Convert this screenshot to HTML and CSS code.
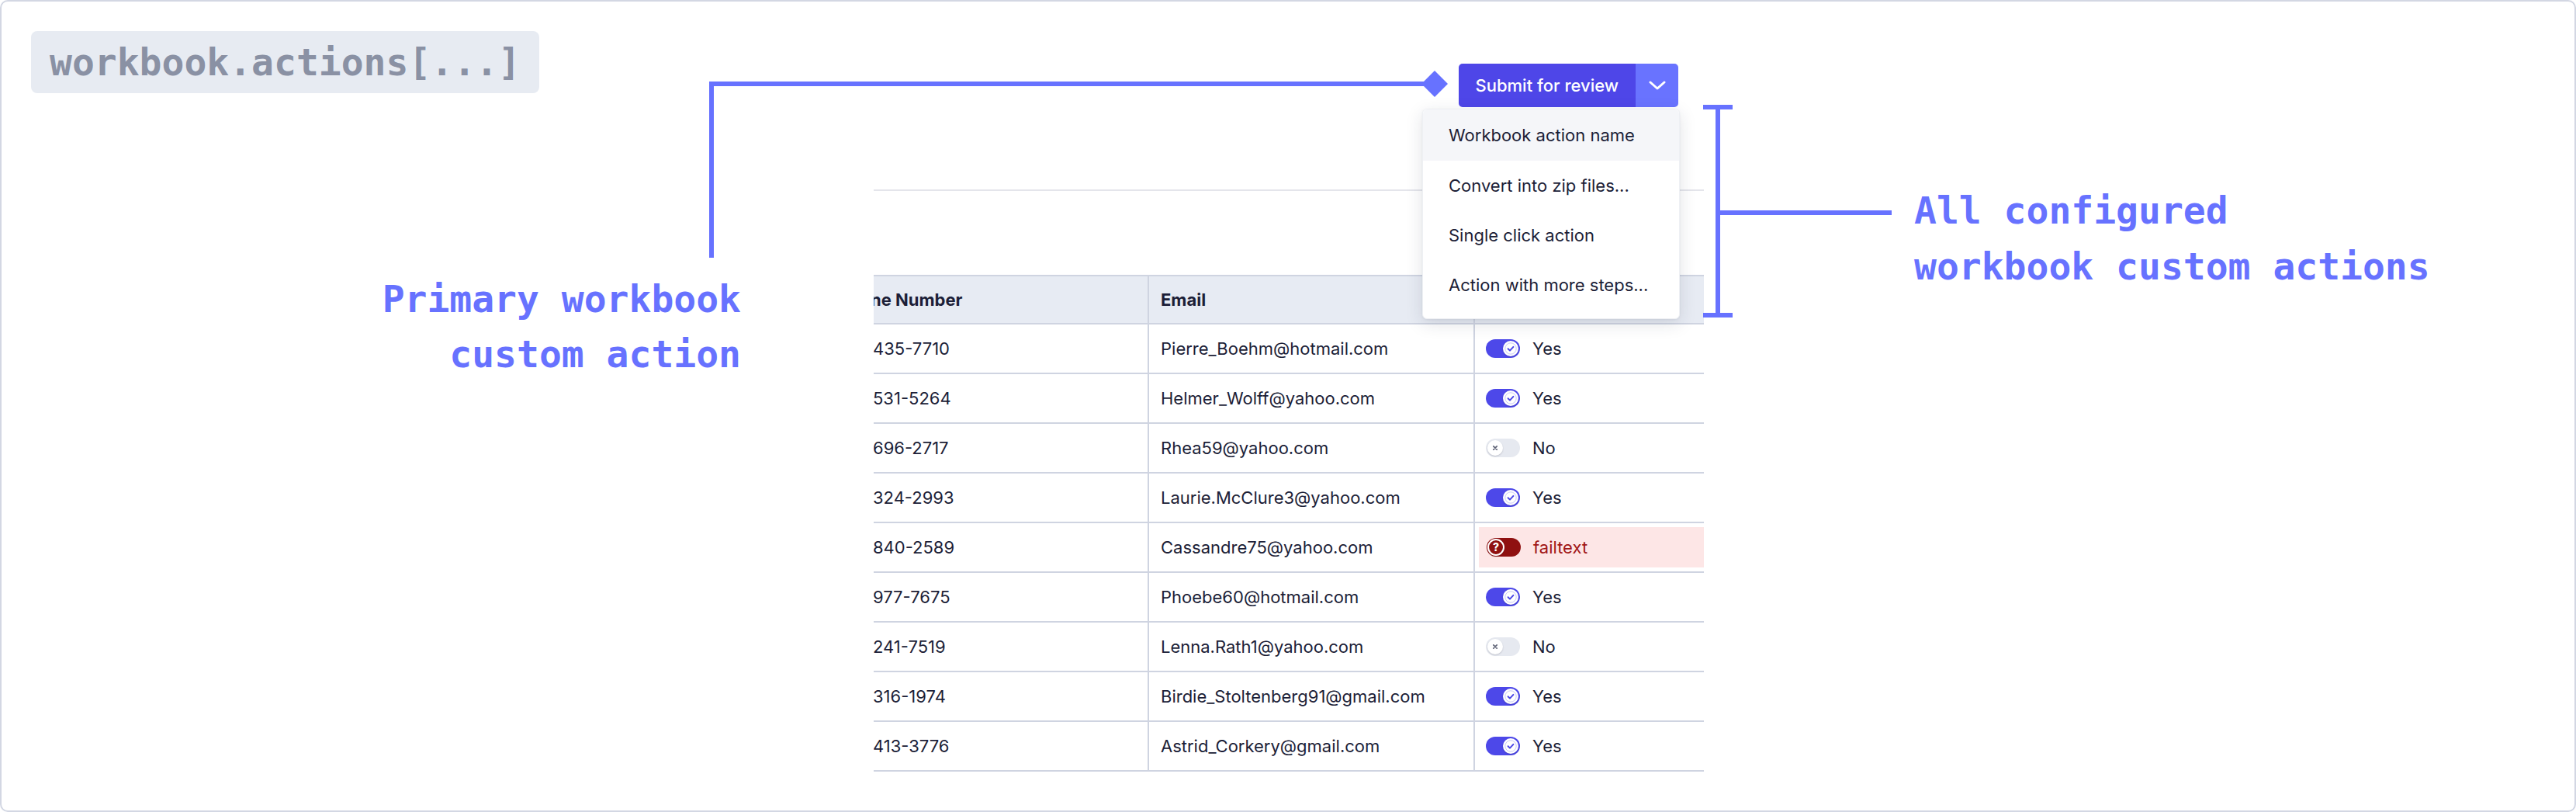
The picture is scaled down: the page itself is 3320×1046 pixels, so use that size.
FILE: index.html
```html
<!DOCTYPE html>
<html lang="en">
<head>
<meta charset="utf-8">
<title>workbook.actions</title>
<link rel="stylesheet" href="styles.css">
</head>
<body>
<div class="frame">
  <div class="code-badge">workbook.actions[...]</div>

  <div class="app">
    <div class="toolbar">
      <div class="split-btn">
        <span class="btn-main">Submit for review</span>
        <span class="btn-more">
          <svg width="22" height="12" viewBox="0 0 22 12"><path d="M2 2 L11 10 L20 2" fill="none" stroke="#fff" stroke-width="3" stroke-linecap="round" stroke-linejoin="round"/></svg>
        </span>
      </div>
      <div class="menu">
        <div class="menu-item is-active">Workbook action name</div>
        <div class="menu-item">Convert into zip files...</div>
        <div class="menu-item">Single click action</div>
        <div class="menu-item">Action with more steps...</div>
      </div>
    </div>

    <div class="table-wrap">
      <div class="row head">
        <div class="cell c1"><span class="cut-head">ne Number</span></div>
        <div class="cell c2">Email</div>
        <div class="cell c3"></div>
      </div>
      <div class="row">
        <div class="cell c1"><span class="cut">435-7710</span></div>
        <div class="cell c2">Pierre_Boehm@hotmail.com</div>
        <div class="cell c3"><span class="toggle on"><span class="knob"><svg width="20" height="20" viewBox="0 0 20 20"><circle cx="10" cy="10" r="7.2" fill="none" stroke="#c9c8f7" stroke-width="1"/><path d="M6.6 10.3 L9 12.6 L13.4 7.9" fill="none" stroke="#4b47e6" stroke-width="2" stroke-linecap="round" stroke-linejoin="round"/></svg></span></span><span class="val">Yes</span></div>
      </div>
      <div class="row">
        <div class="cell c1"><span class="cut">531-5264</span></div>
        <div class="cell c2">Helmer_Wolff@yahoo.com</div>
        <div class="cell c3"><span class="toggle on"><span class="knob"><svg width="20" height="20" viewBox="0 0 20 20"><circle cx="10" cy="10" r="7.2" fill="none" stroke="#c9c8f7" stroke-width="1"/><path d="M6.6 10.3 L9 12.6 L13.4 7.9" fill="none" stroke="#4b47e6" stroke-width="2" stroke-linecap="round" stroke-linejoin="round"/></svg></span></span><span class="val">Yes</span></div>
      </div>
      <div class="row">
        <div class="cell c1"><span class="cut">696-2717</span></div>
        <div class="cell c2">Rhea59@yahoo.com</div>
        <div class="cell c3"><span class="toggle off"><span class="knob"><svg width="20" height="20" viewBox="0 0 20 20"><path d="M7.8 7.8 L12.2 12.2 M12.2 7.8 L7.8 12.2" fill="none" stroke="#5f6376" stroke-width="1.7" stroke-linecap="round"/></svg></span></span><span class="val">No</span></div>
      </div>
      <div class="row">
        <div class="cell c1"><span class="cut">324-2993</span></div>
        <div class="cell c2">Laurie.McClure3@yahoo.com</div>
        <div class="cell c3"><span class="toggle on"><span class="knob"><svg width="20" height="20" viewBox="0 0 20 20"><circle cx="10" cy="10" r="7.2" fill="none" stroke="#c9c8f7" stroke-width="1"/><path d="M6.6 10.3 L9 12.6 L13.4 7.9" fill="none" stroke="#4b47e6" stroke-width="2" stroke-linecap="round" stroke-linejoin="round"/></svg></span></span><span class="val">Yes</span></div>
      </div>
      <div class="row">
        <div class="cell c1"><span class="cut">840-2589</span></div>
        <div class="cell c2">Cassandre75@yahoo.com</div>
        <div class="cell c3 fail-cell"><div class="fail-box"><span class="toggle fail"><span class="knob"><span class="q">?</span></span></span><span class="val fail-text">failtext</span></div></div>
      </div>
      <div class="row">
        <div class="cell c1"><span class="cut">977-7675</span></div>
        <div class="cell c2">Phoebe60@hotmail.com</div>
        <div class="cell c3"><span class="toggle on"><span class="knob"><svg width="20" height="20" viewBox="0 0 20 20"><circle cx="10" cy="10" r="7.2" fill="none" stroke="#c9c8f7" stroke-width="1"/><path d="M6.6 10.3 L9 12.6 L13.4 7.9" fill="none" stroke="#4b47e6" stroke-width="2" stroke-linecap="round" stroke-linejoin="round"/></svg></span></span><span class="val">Yes</span></div>
      </div>
      <div class="row">
        <div class="cell c1"><span class="cut">241-7519</span></div>
        <div class="cell c2">Lenna.Rath1@yahoo.com</div>
        <div class="cell c3"><span class="toggle off"><span class="knob"><svg width="20" height="20" viewBox="0 0 20 20"><path d="M7.8 7.8 L12.2 12.2 M12.2 7.8 L7.8 12.2" fill="none" stroke="#5f6376" stroke-width="1.7" stroke-linecap="round"/></svg></span></span><span class="val">No</span></div>
      </div>
      <div class="row">
        <div class="cell c1"><span class="cut">316-1974</span></div>
        <div class="cell c2">Birdie_Stoltenberg91@gmail.com</div>
        <div class="cell c3"><span class="toggle on"><span class="knob"><svg width="20" height="20" viewBox="0 0 20 20"><circle cx="10" cy="10" r="7.2" fill="none" stroke="#c9c8f7" stroke-width="1"/><path d="M6.6 10.3 L9 12.6 L13.4 7.9" fill="none" stroke="#4b47e6" stroke-width="2" stroke-linecap="round" stroke-linejoin="round"/></svg></span></span><span class="val">Yes</span></div>
      </div>
      <div class="row">
        <div class="cell c1"><span class="cut">413-3776</span></div>
        <div class="cell c2">Astrid_Corkery@gmail.com</div>
        <div class="cell c3"><span class="toggle on"><span class="knob"><svg width="20" height="20" viewBox="0 0 20 20"><circle cx="10" cy="10" r="7.2" fill="none" stroke="#c9c8f7" stroke-width="1"/><path d="M6.6 10.3 L9 12.6 L13.4 7.9" fill="none" stroke="#4b47e6" stroke-width="2" stroke-linecap="round" stroke-linejoin="round"/></svg></span></span><span class="val">Yes</span></div>
      </div>
    </div>
  </div>

  <div class="pointer-line"></div>
  <div class="pointer-diamond"></div>
  <div class="label label-primary">Primary workbook<br>custom action</div>

  <div class="bracket"></div>
  <div class="bracket-arm"></div>
  <div class="label label-all">All configured<br>workbook custom actions</div>
</div>
</body>
</html>
```

FILE: styles.css
```css
* { box-sizing: border-box; }

html, body {
  margin: 0;
  padding: 0;
  background: #ffffff;
}

body {
  font-family: "Inter", "Noto Sans", sans-serif;
  color: #1c1e37;
}

.frame {
  position: relative;
  width: 3320px;
  height: 1046px;
  border: 2px solid #d3d7e3;
  border-radius: 10px;
  padding: 38px;
  overflow: hidden;
  background: #ffffff;
}

.code-badge {
  display: inline-block;
  height: 80px;
  padding: 0 24px;
  background: #e7ebf2;
  border-radius: 8px;
  font-family: "DejaVu Sans Mono", "Liberation Mono", monospace;
  font-weight: bold;
  font-size: 48px;
  line-height: 80px;
  color: #8a91a4;
  white-space: nowrap;
}

/* ---------- app mock ---------- */
.app {
  position: absolute;
  left: 1124px;
  top: 80px;
  width: 1070px;
}

.toolbar {
  position: relative;
  height: 164px;
  border-bottom: 2px solid #e4e5eb;
  display: flex;
  justify-content: flex-end;
  align-items: flex-start;
  padding-right: 33px;
}

.split-btn {
  display: flex;
  height: 56px;
  border-radius: 5px;
  overflow: hidden;
}

.btn-main {
  display: flex;
  align-items: center;
  padding: 0 22px;
  background: #4e46e8;
  color: #ffffff;
  font-size: 22px;
  font-weight: 500;
  white-space: nowrap;
}

.btn-more {
  display: flex;
  align-items: center;
  justify-content: center;
  width: 55px;
  background: #6973ff;
}

.menu {
  position: absolute;
  top: 58px;
  right: 31px;
  width: 332px;
  padding: 0 0 11px;
  background: #ffffff;
  border-radius: 6px;
  border: 1px solid #eef0f4;
  box-shadow: 0 6px 22px rgba(30, 35, 60, 0.13), 0 1px 3px rgba(30, 35, 60, 0.06);
  z-index: 5;
}

.menu-item {
  height: 64px;
  display: flex;
  align-items: center;
  padding-left: 33px;
  font-size: 22px;
  color: #1c1e37;
  white-space: nowrap;
}

.menu-item.is-active {
  height: 66px;
  background: #f5f6f9;
  border-radius: 6px 6px 0 0;
}

/* ---------- table ---------- */
.table-wrap {
  margin-top: 108px;
  width: 1070px;
  overflow: hidden;
}

.row {
  display: grid;
  grid-template-columns: 353px 420px 400px;
  height: 64px;
  border-bottom: 2px solid #cfd4e1;
  font-size: 22px;
}

.row.head {
  height: 64px;
  border-top: 2px solid #cfd4e1;
  background: #e7ebf3;
  font-weight: 700;
}

.cell {
  display: flex;
  align-items: center;
  white-space: nowrap;
  overflow: hidden;
}

.c1 { padding-left: 0; }
.c2 { padding-left: 15px; border-left: 2px solid #cfd4e1; }
.c3 { padding-left: 14px; border-left: 2px solid #cfd4e1; }

.cut-head { margin-left: -4px; }
.cut { margin-left: -1px; }

.toggle {
  position: relative;
  display: inline-flex;
  align-items: center;
  width: 44px;
  height: 24px;
  border-radius: 12px;
  padding: 2px;
  flex: none;
}

.toggle.on { background: #4d48e9; justify-content: flex-end; }
.toggle.off { background: #e6e9f0; justify-content: flex-start; }
.toggle.fail { background: #8f1010; justify-content: flex-start; }

.knob {
  width: 20px;
  height: 20px;
  border-radius: 50%;
  background: #ffffff;
  display: flex;
  align-items: center;
  justify-content: center;
  box-shadow: 0 1px 2px rgba(20, 20, 40, 0.18);
}

.knob svg { display: block; }

.toggle.fail .knob {
  width: 22px;
  height: 22px;
  margin-left: -1px;
  background: #8f1010;
  border: 2px solid #ffffff;
}

.q {
  color: #ffffff;
  font-size: 14px;
  font-weight: 800;
  line-height: 14px;
}

.val {
  margin-left: 16px;
}

.fail-cell {
  padding: 5px 0 5px 5px;
  align-items: stretch;
}

.fail-box {
  flex: 1;
  display: flex;
  align-items: center;
  padding-left: 10px;
  background: #fde6e6;
}

.fail-text { color: #a11616; }

/* ---------- annotations ---------- */
.pointer-line {
  position: absolute;
  left: 912px;
  top: 103px;
  width: 935px;
  height: 227px;
  border-top: 6px solid #6772ff;
  border-left: 6px solid #6772ff;
}

.pointer-diamond {
  position: absolute;
  left: 1835px;
  top: 94px;
  width: 24px;
  height: 24px;
  background: #6772ff;
  transform: rotate(45deg);
}

.label {
  position: absolute;
  font-family: "DejaVu Sans Mono", "Liberation Mono", monospace;
  font-weight: bold;
  font-size: 48px;
  color: #6772ff;
  white-space: nowrap;
}

.label-primary {
  left: 300px;
  top: 348px;
  width: 653px;
  text-align: right;
  line-height: 71px;
}

.label-all {
  left: 2465px;
  top: 233px;
  line-height: 72px;
}

.bracket {
  position: absolute;
  left: 2193px;
  top: 133px;
  width: 38px;
  height: 274px;
  border-top: 6px solid #6772ff;
  border-bottom: 6px solid #6772ff;
}

.bracket::before {
  content: "";
  position: absolute;
  left: 16px;
  top: 0;
  width: 6px;
  height: 100%;
  background: #6772ff;
}

.bracket-arm {
  position: absolute;
  left: 2210px;
  top: 269px;
  width: 226px;
  height: 6px;
  background: #6772ff;
}
```
